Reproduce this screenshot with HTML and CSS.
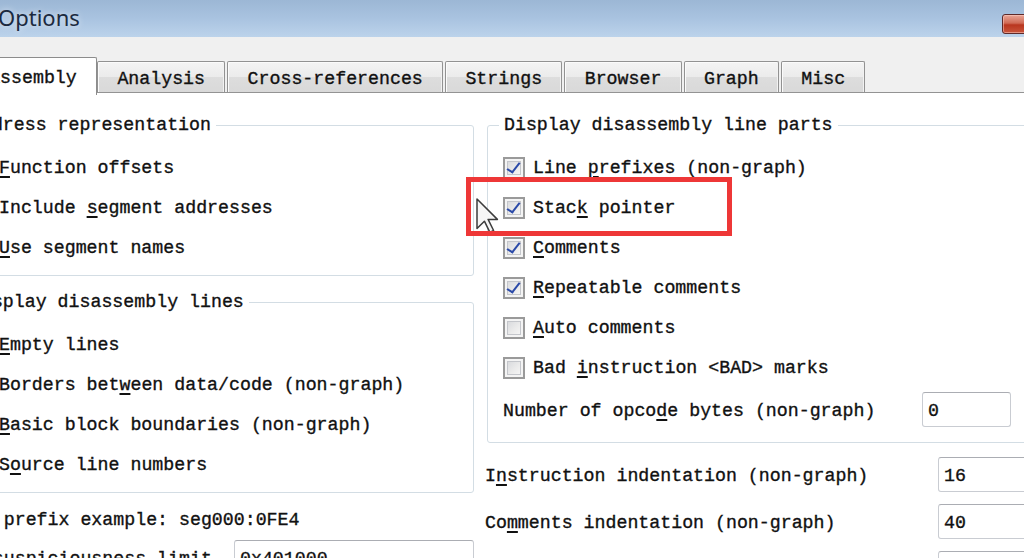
FILE: index.html
```html
<!DOCTYPE html>
<html lang="en">
<head>
<meta charset="utf-8">
<title>Options</title>
<link rel="stylesheet" href="styles.css">
</head>
<body>
<div class="window">
  <header class="titlebar">
    <span class="title">Options</span>
    <span class="close"></span>
  </header>
  <nav class="tabs">
    <div class="tab active">Disassembly</div>
    <div class="tab">Analysis</div>
    <div class="tab">Cross-references</div>
    <div class="tab">Strings</div>
    <div class="tab">Browser</div>
    <div class="tab">Graph</div>
    <div class="tab">Misc</div>
  </nav>
  <main class="panel">
    <div class="columns">
      <div class="col">
        <fieldset class="group">
          <legend>Address representation</legend>
          <div class="row"><span class="cb checked"></span><span><u>F</u>unction offsets</span></div>
          <div class="row"><span class="cb checked"></span><span>Include <u>s</u>egment addresses</span></div>
          <div class="row"><span class="cb"></span><span><u>U</u>se segment names</span></div>
        </fieldset>
        <fieldset class="group group-second">
          <legend>Display disassembly lines</legend>
          <div class="row"><span class="cb"></span><span><u>E</u>mpty lines</span></div>
          <div class="row"><span class="cb"></span><span>Borders bet<u>w</u>een data/code (non-graph)</span></div>
          <div class="row"><span class="cb"></span><span><u>B</u>asic block boundaries (non-graph)</span></div>
          <div class="row"><span class="cb"></span><span>S<u>o</u>urce line numbers</span></div>
        </fieldset>
        <div class="plain-row">Line prefix example: seg000:0FE4</div>
        <div class="field-row field-left">
          <span class="field-label">Low suspiciousness limit</span>
          <span class="input">0x401000</span>
        </div>
      </div>
      <div class="col">
        <fieldset class="group">
          <legend>Display disassembly line parts</legend>
          <div class="row"><span class="cb checked"></span><span>Line <u>p</u>refixes (non-graph)</span></div>
          <div class="row"><span class="cb checked"></span><span>Stac<u>k</u> pointer</span></div>
          <div class="row"><span class="cb checked"></span><span><u>C</u>omments</span></div>
          <div class="row"><span class="cb checked"></span><span><u>R</u>epeatable comments</span></div>
          <div class="row"><span class="cb"></span><span><u>A</u>uto comments</span></div>
          <div class="row"><span class="cb"></span><span>Bad <u>i</u>nstruction &lt;BAD&gt; marks</span></div>
          <div class="field-row field-opcode">
            <span class="field-label">Number of opco<u>d</u>e bytes (non-graph)</span>
            <span class="input">0</span>
          </div>
        </fieldset>
        <div class="field-row field-right first">
          <span class="field-label">I<u>n</u>struction indentation (non-graph)</span>
          <span class="input">16</span>
        </div>
        <div class="field-row field-right">
          <span class="field-label">Co<u>m</u>ments indentation (non-graph)</span>
          <span class="input">40</span>
        </div>
        <div class="field-row field-right">
          <span class="field-label">Right margin (non-graph)</span>
          <span class="input">70</span>
        </div>
      </div>
    </div>
  </main>
  <svg class="cursor" width="26" height="38" viewBox="0 0 26 38">
    <path d="M1 1 L1 30.5 L8.4 23.2 L13.9 34.3 L17.6 32.5 L12.1 21.4 L21.4 21.4 Z" fill="#f6f6f6" stroke="#3c3c3c" stroke-width="1.5" stroke-linejoin="round"/>
  </svg>
  <div class="highlight"></div>
</div>
</body>
</html>
```

FILE: styles.css
```css
html, body {
  margin: 0;
  padding: 0;
  background: #ffffff;
}

.window {
  position: relative;
  width: 1024px;
  height: 558px;
  overflow: hidden;
  background: #f0f0f0;
  font-family: "Liberation Mono", "DejaVu Sans Mono", monospace;
  font-size: 18.25px;
  line-height: 20px;
  color: #111111;
  -webkit-text-stroke: 0.35px #111111;
}

u {
  text-decoration: underline;
  text-underline-offset: 3px;
  text-decoration-thickness: 1.5px;
}

/* title bar */
.titlebar {
  height: 37px;
  display: flex;
  align-items: center;
  justify-content: space-between;
  background: linear-gradient(to bottom, #9cb7d5 0%, #a9c3e0 50%, #bcd3eb 100%);
}

.title {
  font-family: "Noto Sans", "Open Sans", sans-serif;
  font-size: 22px;
  color: #1b2a3f;
  -webkit-text-stroke: 0;
  margin-left: -2px;
  margin-top: -3px;
  text-shadow: 0 0 6px rgba(255, 255, 255, 0.7);
}

.close {
  width: 40px;
  height: 18px;
  margin-right: -20px;
  margin-top: 10px;
  border: 1px solid #5e2a2a;
  border-radius: 3px;
  background: linear-gradient(to bottom, #e9a697 0%, #d06a55 45%, #b9361f 55%, #c9553b 100%);
  box-shadow: inset 0 0 0 1px rgba(255, 210, 200, 0.5);
}

/* tabs */
.tabs {
  height: 55px;
  display: flex;
  align-items: flex-end;
  gap: 2px;
  margin-left: -64px;
  position: relative;
  z-index: 2;
}

.tab {
  height: 31px;
  box-sizing: border-box;
  padding: 3px 19.3px 0;
  display: flex;
  align-items: center;
  border: 1px solid #929292;
  border-bottom: none;
  border-radius: 2px 2px 0 0;
  background: linear-gradient(to bottom, #f4f4f4 0%, #ebebeb 50%, #dddddd 51%, #d9d9d9 100%);
  box-shadow: inset 1px 1px 0 #fbfbfb, inset -1px 0 0 #f2f2f2;
  white-space: nowrap;
}

.tab.active {
  height: 38px;
  margin-bottom: -3px;
  margin-right: -2px;
  padding-top: 3px;
  padding-bottom: 0;
  background: #ffffff;
  box-shadow: none;
  border-color: #8c8c8c;
}

/* panel */
.panel {
  background: #ffffff;
  border-top: 1px solid #939393;
  padding-top: 22px;
  height: 600px;
  position: relative;
  z-index: 1;
}

.columns {
  display: grid;
  grid-template-columns: 521px 640px;
  column-gap: 13px;
  margin-left: -47px;
  align-items: start;
}

.col {
  display: flex;
  flex-direction: column;
}

.group {
  margin: 0;
  padding: 13px 15px 7px;
  border: 1px solid #d3dde4;
  border-radius: 3px;
  min-width: 0;
}

.group legend {
  padding: 0 5px;
  margin-left: -4px;
  line-height: 20px;
  white-space: nowrap;
}

.group-second {
  margin-top: 16px;
}

.row {
  height: 40px;
  display: flex;
  align-items: center;
  gap: 8px;
  white-space: nowrap;
}

/* checkbox */
.cb {
  flex: none;
  width: 22px;
  height: 22px;
  box-sizing: border-box;
  border: 2px solid #9a9a9a;
  background: linear-gradient(135deg, #d2d4d8 0%, #ebebeb 55%, #fafafa 100%);
  box-shadow: inset 0 0 0 2px #f4f4f4, inset 0 0 0 3px #c4c6cb;
  position: relative;
  -webkit-text-stroke: 0;
}

.cb.checked::after {
  content: "";
  position: absolute;
  left: 5px;
  top: 1px;
  width: 5px;
  height: 11px;
  border: solid #2b4aa8;
  border-width: 0 2.5px 2.5px 0;
  transform: rotate(38deg) skewY(-8deg);
  transform-origin: center;
}

/* label + input rows */
.field-row {
  display: grid;
  align-items: center;
  height: 35px;
  white-space: nowrap;
}

.field-label {
  padding-top: 2px;
}

.field-opcode {
  grid-template-columns: 419px 89px;
  margin-top: 4px;
  margin-bottom: 8px;
}

.field-right {
  grid-template-columns: 453px 120px;
  margin-top: 12px;
  margin-left: -2px;
}

.field-right.first {
  margin-top: 14px;
}

.field-left {
  grid-template-columns: 285px 240px;
  margin-left: -4px;
  margin-top: 0;
}

.plain-row {
  height: 40px;
  display: flex;
  align-items: center;
  margin-top: 7px;
  margin-left: -4px;
  white-space: nowrap;
}

.input {
  height: 35px;
  box-sizing: border-box;
  display: flex;
  align-items: center;
  padding: 2px 0 0 5px;
  border: 1px solid #c9ccd2;
  border-top-color: #abadb3;
  border-radius: 3px;
  background: #ffffff;
}

/* overlays */
.cursor {
  position: absolute;
  left: 476px;
  top: 198px;
  z-index: 5;
  filter: blur(0.4px);
}

.highlight {
  position: absolute;
  left: 466px;
  top: 177px;
  width: 256px;
  height: 49px;
  border: 5px solid #ee3737;
  z-index: 6;
}
```
